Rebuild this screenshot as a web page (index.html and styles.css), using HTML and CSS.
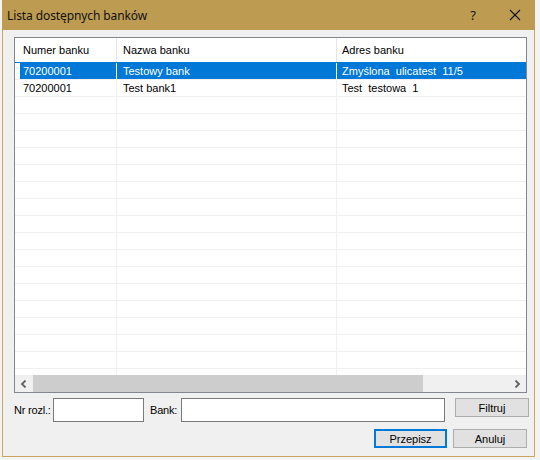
FILE: index.html
```html
<!DOCTYPE html>
<html>
<head>
<meta charset="utf-8">
<link rel="stylesheet" href="styles.css">
</head>
<body>
<div class="window">
  <div class="titlebar">
    <span class="title">Lista dostępnych banków</span>
    <span class="help">?</span>
    <svg class="close" width="12" height="12" viewBox="0 0 12 12"><path d="M1 1 L11 11 M11 1 L1 11" stroke="#111" stroke-width="1.1" fill="none"/></svg>
  </div>
  <div class="client">
    <div class="list">
      <div class="rows">
        <div class="row header">
          <div class="cell c1"><span class="txt">Numer banku</span></div>
          <div class="cell c2"><span class="txt">Nazwa banku</span></div>
          <div class="cell c3"><span class="txt">Adres banku</span></div>
        </div>
        <div class="row sel">
          <div class="cell c1"><span class="txt">70200001</span></div>
          <div class="cell c2"><span class="txt">Testowy bank</span></div>
          <div class="cell c3"><span class="txt">Zmyślona  ulicatest  11/5</span></div>
        </div>
        <div class="row">
          <div class="cell c1"><span class="txt">70200001</span></div>
          <div class="cell c2"><span class="txt">Test bank1</span></div>
          <div class="cell c3"><span class="txt">Test  testowa  1</span></div>
        </div>
        <div class="row"><div class="cell c1"></div><div class="cell c2"></div><div class="cell c3"></div></div>
        <div class="row"><div class="cell c1"></div><div class="cell c2"></div><div class="cell c3"></div></div>
        <div class="row"><div class="cell c1"></div><div class="cell c2"></div><div class="cell c3"></div></div>
        <div class="row"><div class="cell c1"></div><div class="cell c2"></div><div class="cell c3"></div></div>
        <div class="row"><div class="cell c1"></div><div class="cell c2"></div><div class="cell c3"></div></div>
        <div class="row"><div class="cell c1"></div><div class="cell c2"></div><div class="cell c3"></div></div>
        <div class="row"><div class="cell c1"></div><div class="cell c2"></div><div class="cell c3"></div></div>
        <div class="row"><div class="cell c1"></div><div class="cell c2"></div><div class="cell c3"></div></div>
        <div class="row"><div class="cell c1"></div><div class="cell c2"></div><div class="cell c3"></div></div>
        <div class="row"><div class="cell c1"></div><div class="cell c2"></div><div class="cell c3"></div></div>
        <div class="row"><div class="cell c1"></div><div class="cell c2"></div><div class="cell c3"></div></div>
        <div class="row"><div class="cell c1"></div><div class="cell c2"></div><div class="cell c3"></div></div>
        <div class="row"><div class="cell c1"></div><div class="cell c2"></div><div class="cell c3"></div></div>
        <div class="row"><div class="cell c1"></div><div class="cell c2"></div><div class="cell c3"></div></div>
        <div class="row"><div class="cell c1"></div><div class="cell c2"></div><div class="cell c3"></div></div>
        <div class="row"><div class="cell c1"></div><div class="cell c2"></div><div class="cell c3"></div></div>
        <div class="row"><div class="cell c1"></div><div class="cell c2"></div><div class="cell c3"></div></div>
      </div>
      <div class="hscroll">
        <div class="sbtn"><svg width="8" height="8" viewBox="0 0 8 8"><path d="M5.5 0.5 L2 4 L5.5 7.5" stroke="#606060" stroke-width="1.8" fill="none"/></svg></div>
        <div class="thumb"></div>
        <div class="track"></div>
        <div class="sbtn"><svg width="8" height="8" viewBox="0 0 8 8"><path d="M2.5 0.5 L6 4 L2.5 7.5" stroke="#606060" stroke-width="1.8" fill="none"/></svg></div>
      </div>
    </div>
    <div class="formrow">
      <span class="label l1">Nr rozl.:</span>
      <div class="input in1"></div>
      <span class="label lbank">Bank:</span>
      <div class="input in2"></div>
      <div class="btn filtr">Filtruj</div>
    </div>
    <div class="btnrow">
      <div class="btn default">Przepisz</div>
      <div class="btn">Anuluj</div>
    </div>
  </div>
</div>
</body>
</html>
```
FILE: styles.css
```css
html, body {
  margin: 0;
  padding: 0;
}
body {
  width: 540px;
  height: 460px;
  background: #f3f3f3;
  overflow: hidden;
  font-family: "Liberation Sans", Arial, sans-serif;
  font-size: 11px;
  color: #000;
}
.window {
  margin-left: 2px;
  width: 533px;
  height: 457px;
  box-sizing: border-box;
  border: 1px solid #c9a65b;
  border-top: none;
  background: #f0f0f0;
  display: flex;
  flex-direction: column;
}
.titlebar {
  height: 30px;
  margin: 0 -1px;
  background: #bd9c52;
  display: flex;
  align-items: center;
  position: relative;
}
.title {
  font-family: "Noto Sans", "Open Sans", sans-serif;
  font-size: 12px;
  margin-left: 5px;
  color: #111;
  letter-spacing: -0.1px;
}
.help {
  font-family: "Noto Sans", sans-serif;
  font-size: 13px;
  margin-left: auto;
  color: #111;
  margin-right: 33px;
}
.close {
  margin-right: 14px;
}
.client {
  flex: 1;
  padding: 7px 0 0 11px;
}
.list {
  width: 513px;
  height: 356px;
  box-sizing: border-box;
  border: 1px solid #828790;
  background: #fff;
  display: flex;
  flex-direction: column;
}
.rows {
  height: 337px;
  overflow: hidden;
}
.row {
  display: flex;
  height: 17px;
  box-sizing: border-box;
  border-top: 1px solid #f0f0f0;
}
.row.header {
  height: 24px;
  border-top: none;
}
.cell {
  height: 100%;
  box-sizing: border-box;
  border-right: 1px solid #f0f0f0;
  display: flex;
  align-items: stretch;
  white-space: pre;
}
.row.header .cell {
  border-right-color: #e5e5e5;
}
.c1 { width: 102px; padding-left: 5px; }
.c2 { width: 220px; }
.c3 { width: 189px; border-right: none; }
.txt {
  flex: 1;
  display: flex;
  align-items: center;
}
.c1 .txt { padding-left: 3px; }
.c2 .txt { padding-left: 6px; }
.c3 .txt { padding-left: 5px; }
.row.sel {
  border-top-color: #0078d7;
}
.row.sel .cell { border-right-color: #fff; }
.row.sel .txt {
  background: #0078d7;
  color: #fff;
  margin-top: -1px;
}
.hscroll {
  height: 17px;
  display: flex;
  background: #f0f0f0;
}
.sbtn {
  width: 18px;
  display: flex;
  align-items: center;
  justify-content: center;
}
.thumb {
  width: 390px;
  background: #cdcdcd;
}
.track { flex: 1; }
.formrow {
  display: flex;
  align-items: center;
  margin-top: 5px;
  height: 24px;
}
.label {
  white-space: nowrap;
  letter-spacing: -0.2px;
}
.l1 { width: 39px; }
.input {
  box-sizing: border-box;
  height: 24px;
  border: 1px solid #7a7a7a;
  background: #fff;
}
.in1 { width: 91px; }
.lbank { margin-left: 6px; width: 31px; }
.in2 { width: 264px; }
.btn {
  box-sizing: border-box;
  width: 74px;
  height: 19px;
  border: 1px solid #adadad;
  background: #e1e1e1;
  display: flex;
  align-items: center;
  justify-content: center;
}
.filtr { margin-left: 10px; margin-top: -5px; }
.btnrow {
  display: flex;
  justify-content: flex-end;
  gap: 6px;
  width: 513px;
  margin-top: 7px;
}
.btn.default {
  width: 73px;
  border: 2px solid #0078d7;
}
```
